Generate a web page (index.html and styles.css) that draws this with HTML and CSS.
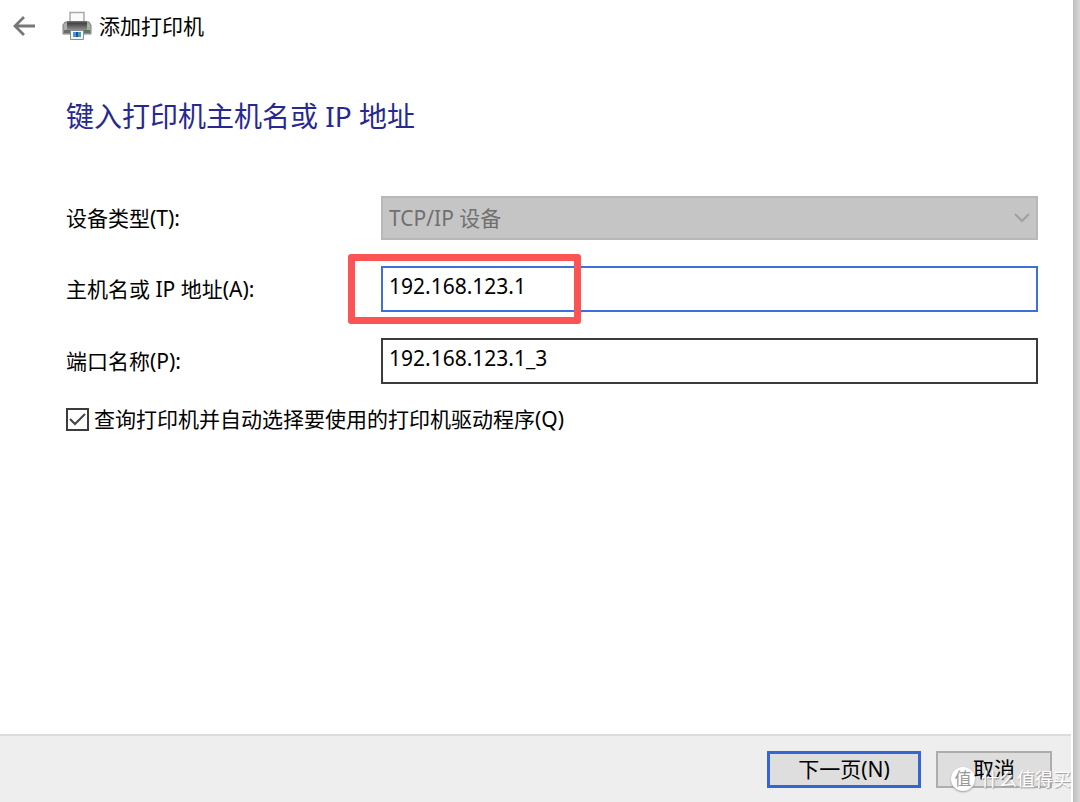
FILE: index.html
```html
<!DOCTYPE html>
<html lang="zh-CN">
<head>
<meta charset="utf-8">
<meta name="viewport" content="width=device-width, initial-scale=1">
<title>添加打印机</title>
<link rel="stylesheet" href="styles.css">
</head>
<body>
<div class="desktop">
  <form class="wizard">
    <header class="titlebar">
      <button class="back" type="button" aria-label="返回">
        <svg width="24" height="24" viewBox="0 0 24 24" fill="none" stroke="#777" stroke-width="2.8"><path d="M23 12H3M12 3L3 12l9 9"/></svg>
      </button>
      <svg class="printer" width="30" height="30" viewBox="0 0 30 30">
        <defs>
          <linearGradient id="body" x1="0" y1="0" x2="0" y2="1"><stop offset="0" stop-color="#777"/><stop offset=".25" stop-color="#444"/><stop offset="1" stop-color="#8f8f8f"/></linearGradient>
        </defs>
        <path d="M8 11V1.500h14V11" fill="#fafafa" stroke="#aaa" stroke-width="1.500"/>
        <path d="M3 11h3v8h18v-8h3l2 3v9H1v-9z" fill="#a9adab" stroke="#7b7e7c"/>
        <path d="M5 10h20v9H5z" fill="url(#body)"/>
        <path d="M2 19h26v3H2z" fill="#686c6a"/>
        <path d="M26 16h2v3h-2z" fill="#64df4b"/>
        <path d="M8.500 19.500h13v9h-13z" fill="#f6f6f6" stroke="#8d8d8d"/>
        <path d="M11 21h3v5h-3z" fill="#4a94d8"/><path d="M14 21h2v5h-2z" fill="#254e9c"/><path d="M16 21h3v5h-3z" fill="#48a3a0"/>
      </svg>
      <span class="caption">添加打印机</span>
    </header>
    <main class="content">
      <h1 class="heading">键入打印机主机名或 IP 地址</h1>
      <div class="fields">
        <label for="device">设备类型(T):</label>
        <div class="field">
          <select class="control" id="device" disabled><option>TCP/IP 设备</option></select>
          <svg class="chevron" width="16" height="10" viewBox="0 0 16 10" fill="none" stroke="#a0a0a0" stroke-width="2"><path d="M1 1l7 7 7-7"/></svg>
        </div>
        <label for="host">主机名或 IP 地址(A):</label>
        <div class="field">
          <input class="control active" id="host" type="text" value="192.168.123.1">
          <span class="marker"></span>
        </div>
        <label for="port">端口名称(P):</label>
        <div class="field">
          <input class="control" id="port" type="text" value="192.168.123.1_3">
        </div>
      </div>
      <div class="option">
        <input class="check" id="query" type="checkbox" checked>
        <label for="query">查询打印机并自动选择要使用的打印机驱动程序(Q)</label>
      </div>
    </main>
    <footer class="footer">
      <button class="button primary" type="button">下一页(N)</button>
      <button class="button" type="button">取消</button>
    </footer>
  </form>
  <div class="edge"></div>
  <div class="watermark"><span class="seal">值</span><span>什么值得买</span></div>
</div>
</body>
</html>
```

FILE: styles.css
```css
* { box-sizing: border-box; }

body {
  margin: 0;
  background: #fff;
  color: #000;
  font: 21px/28px "Noto Sans", "Noto Sans CJK SC", sans-serif;
}

button, input, select { font: inherit; color: inherit; margin: 0; }

.desktop { position: relative; display: flex; min-height: 100vh; }
.wizard { flex: 1; display: flex; flex-direction: column; min-width: 0; }
.edge { width: 7px; background: linear-gradient(90deg, #bdbfbf, #d8d8d8); }

.titlebar { display: flex; align-items: center; padding: 11px 12px 0; }
.back { display: flex; padding: 0; border: 0; background: none; }
.printer { margin: 0 7px 0 26px; }

.content { flex: 1; padding: 55px 35px 0 66px; }
.heading {
  margin: 0;
  color: #28288f;
  font-size: 28px;
  font-weight: 400;
  line-height: 40px;
}

.fields {
  display: grid;
  grid-template-columns: 315px 1fr;
  align-items: center;
  row-gap: 26px;
  margin-top: 60px;
}
.field { position: relative; display: flex; align-items: center; }

.control {
  appearance: none;
  width: 100%;
  height: 46px;
  padding: 0 6px 6px;
  border: 2px solid #3c3c3c;
  border-radius: 0;
  outline: 0;
  background: #fff;
}
.control.active { border-color: #3e6fdb; }
.control:disabled {
  height: 44px;
  padding-bottom: 0;
  border-color: #b8b8b8;
  background: #c5c5c5;
  color: #707070;
  opacity: 1;
}
.chevron { position: absolute; right: 8px; }
.marker {
  position: absolute;
  top: -12px;
  left: -33px;
  width: 233px;
  height: 70px;
  border: 7px solid #fc5355;
  border-radius: 3px;
  pointer-events: none;
}

.option { display: flex; align-items: center; gap: 5px; margin-top: 21px; }
.check {
  appearance: none;
  width: 23px;
  height: 23px;
  border: 2px solid #3c3c3c;
  background: #fff url("data:image/svg+xml,%3Csvg xmlns='http://www.w3.org/2000/svg' viewBox='0 0 19 19' fill='none' stroke='%23444' stroke-width='2'%3E%3Cpath d='M2 9l5 5L17 4'/%3E%3C/svg%3E") center / 19px no-repeat;
}

.footer {
  display: flex;
  justify-content: flex-end;
  gap: 15px;
  margin-right: 2px;
  padding: 15px 19px 14px;
  border-top: 2px solid #dcdcdc;
  background: #eee;
}
.button {
  width: 116px;
  height: 37px;
  padding: 0 0 2px;
  border: 2px solid #adadad;
  background: #dedede;
}
.button.primary { width: 154px; border: 3px solid #3465d6; }

.watermark {
  position: absolute;
  right: 9px;
  bottom: 10px;
  display: flex;
  align-items: center;
  gap: 6px;
  color: #fff;
  font-size: 18px;
  line-height: 26px;
  text-shadow: 1px 1px 1px #999;
  pointer-events: none;
}
.seal {
  width: 24px;
  height: 24px;
  border-radius: 50%;
  background: #fff;
  box-shadow: 0 1px 2px #999;
  color: #999;
  font-size: 17px;
  line-height: 23px;
  text-align: center;
  text-shadow: none;
}
```
